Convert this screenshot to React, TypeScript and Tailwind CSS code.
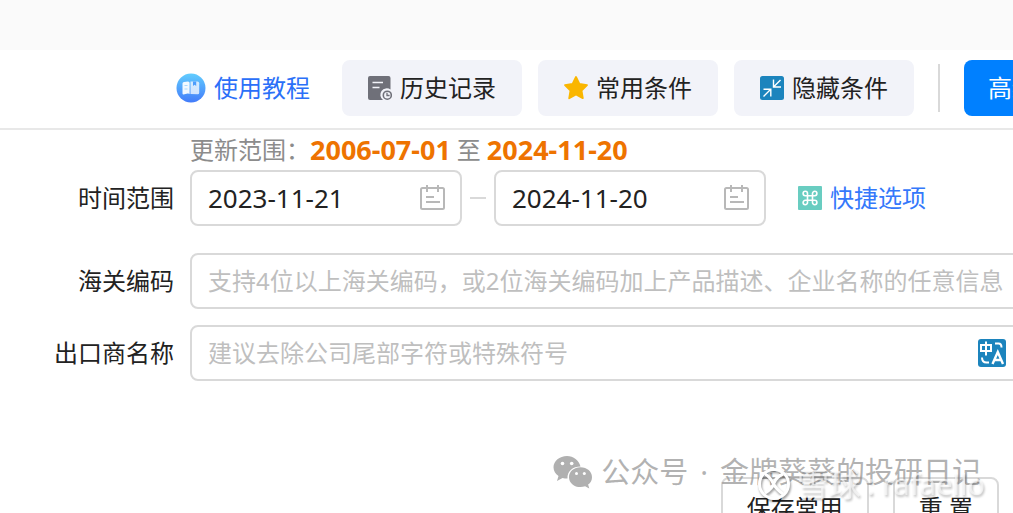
import { useState } from 'react';
import type { ReactNode } from 'react';

const BookIcon = () => (
  <svg viewBox="0 0 30 30" className="size-[30px] shrink-0" aria-hidden="true">
    <defs>
      <linearGradient id="book-bg" x1="0" y1="0" x2="0" y2="1">
        <stop offset="0" stopColor="#62cdfe" />
        <stop offset="1" stopColor="#427bfa" />
      </linearGradient>
    </defs>
    <circle cx="15" cy="15" r="14.5" fill="url(#book-bg)" />
    <path d="M6.500 10.500Q6.500 9 8 9l4-.6q1.600 0 1.600 1.600V21q-1-.6-2-.4L7.500 21.400q-1 0-1-1z" fill="#fff" opacity=".92" />
    <path d="M14.500 8.500h7q1.700 0 1.700 1.700v9.500q0 1.500-1.500 1.500l-7.200-.3z" fill="#fff" opacity=".75" />
    <path d="M17 8.500h3.200v4.500l-1.600-1.200-1.600 1.200z" fill="#4c9dfc" />
    <path d="M8.500 12.500h3M8.500 16h3" stroke="#a9d8ff" strokeWidth="1.200" />
  </svg>
);

const HistoryIcon = () => (
  <svg viewBox="0 0 24 24" className="size-6 shrink-0" aria-hidden="true">
    <path d="M2 0h18.500q2 0 2 2v11.500a6 6 0 0 0-7.500 10.500H2q-2 0-2-2V2q0-2 2-2z" fill="#6f7079" />
    <path d="M4.500 6.500h10.500M4.500 11.500h7" stroke="#f3f4fa" strokeWidth="1.600" />
    <circle cx="19.300" cy="19.200" r="4" fill="none" stroke="#6f7079" strokeWidth="1.600" />
    <path d="M19 16.800v2.700h2.600" fill="none" stroke="#6f7079" strokeWidth="1.300" />
  </svg>
);

const StarIcon = () => (
  <svg viewBox="0 0 24 24" className="size-6 shrink-0" aria-hidden="true">
    <path
      d="M12 1l3.400 7 7.600 1.100-5.500 5.400 1.300 7.700L12 18.500l-6.800 3.700 1.300-7.700L1 9.100 8.600 8z"
      fill="#fab600"
      stroke="#fab600"
      strokeWidth="1.800"
      strokeLinejoin="round"
    />
  </svg>
);

const CollapseIcon = () => (
  <svg viewBox="0 0 24 24" className="size-6 shrink-0" aria-hidden="true">
    <rect width="24" height="24" rx="2.500" fill="#1c84bd" />
    <path d="M20.500 4l-7 7M13.500 3.500V11H21M3.500 20.500l7-7M3.500 13.200h7.300V20.500" fill="none" stroke="#fff" strokeWidth="1.400" />
  </svg>
);

const CalendarIcon = () => (
  <svg viewBox="0 0 26 26" className="size-[26px] shrink-0" fill="none" stroke="#b8b8b8" strokeWidth="2" aria-hidden="true">
    <rect x="2" y="3" width="23" height="21" rx="1.500" />
    <path d="M8 0v7M19 0v7M7 12h8M7 17h14" />
  </svg>
);

const CommandIcon = () => (
  <svg viewBox="0 0 24 24" className="size-6 shrink-0" aria-hidden="true">
    <rect width="24" height="24" rx="1" fill="#69cdc1" />
    <path
      d="M9.500 7.500v9a2.200 2.200 0 1 1-2.200-2.200h9.400a2.200 2.200 0 1 1-2.200 2.200v-9a2.200 2.200 0 1 1 2.200 2.200H7.300a2.200 2.200 0 1 1 2.200-2.200z"
      fill="none"
      stroke="#fff"
      strokeWidth="1.600"
    />
  </svg>
);

const TranslateIcon = () => (
  <svg viewBox="0 0 28 28" className="size-7 shrink-0" fill="none" stroke="#fff" strokeWidth="2" aria-hidden="true">
    <rect width="28" height="28" rx="3" fill="#1c84bd" stroke="none" />
    <path d="M3 6h10v6H3zM8 2.500v14" />
    <path d="M17 4.500h3.500q3 0 3 4M4 18.500q0 5 4.500 5H11" />
    <path d="M14.500 25l5.300-12 5.200 12M16.500 21h6.500" strokeWidth="2.400" />
  </svg>
);

const WechatIcon = () => (
  <svg viewBox="0 0 40 34" className="h-[34px] w-10 shrink-0" aria-hidden="true">
    <path d="M14 1C6.500 1 .5 6 .5 12.300c0 3.500 1.900 6.600 5 8.700L4 26l5.500-3c1.500.4 3 .6 5 .6C14 16 20 11.500 27.500 11.500 26 5.500 20.500 1 14 1z" fill="#b0b0b0" />
    <path d="M27.500 12.300c-6.500 0-11.500 4.300-11.500 9.900s5 9.900 11.500 9.900c1.600 0 3.200-.3 4.600-.8l4.200 2.200-1.200-3.900c2.500-1.800 3.900-4.400 3.900-7.400 0-5.600-5-9.900-11.500-9.900z" fill="#b0b0b0" />
    <g fill="#fff">
      <circle cx="9.500" cy="8.500" r="1.800" />
      <circle cx="18.700" cy="8.500" r="1.800" />
      <circle cx="23.500" cy="18.500" r="1.500" />
      <circle cx="31.300" cy="18.500" r="1.500" />
    </g>
  </svg>
);

const SnowballIcon = () => (
  <svg viewBox="0 0 34 34" className="size-[34px] shrink-0" fill="none" stroke="#fff" strokeWidth="3" aria-hidden="true">
    <circle cx="17" cy="17" r="14.500" />
    <path d="M8 7q5 3 8 9t10 11M26 7q-7 3-9 9T8 26" />
  </svg>
);

const ToolButton = ({ icon, children }: { icon: ReactNode; children: ReactNode }) => (
  <button
    type="button"
    className="flex h-14 shrink-0 items-center gap-2 rounded-lg border-2 border-[#f2f3f9] bg-[#f2f3f9] px-6 whitespace-nowrap"
  >
    {icon}
    {children}
  </button>
);

const DateField = ({ id, label, value, onChange }: { id: string; label: string; value: string; onChange: (v: string) => void }) => (
  <div className="flex h-14 w-[272px] shrink-0 items-center rounded-lg border-2 border-[#d9d9d9] bg-white pr-[15px] pl-4">
    <input
      id={id}
      aria-label={label}
      value={value}
      onChange={e => onChange(e.target.value)}
      className="min-w-0 flex-1 text-[26px] outline-none"
    />
    <CalendarIcon />
  </div>
);

const labelClass = 'w-[174px] shrink-0 text-right whitespace-nowrap';
const fieldClass = 'flex h-14 min-w-0 flex-1 items-center rounded-lg border-2 border-[#d9d9d9] bg-white pl-4 pr-[21px]';
const inputClass = 'min-w-0 flex-1 outline-none placeholder:text-[#bfbfbf]';

export default function App() {
  const [start, setStart] = useState('2023-11-21');
  const [end, setEnd] = useState('2024-11-20');
  const [code, setCode] = useState('');
  const [exporter, setExporter] = useState('');

  return (
    <div className="relative h-screen overflow-hidden bg-white font-['Noto_Sans','Noto_Sans_CJK_SC',sans-serif] text-2xl leading-8 text-[#222]">
      <div className="h-[50px] bg-[#fafafa]" />

      <header className="flex items-center border-b-2 border-[#e8e8e8] pt-2.5 pb-3 pl-44">
        <a href="#tutorial" className="mr-8 flex shrink-0 items-center gap-2 whitespace-nowrap text-[#2b70f8]">
          <BookIcon />
          使用教程
        </a>
        <div className="flex shrink-0 gap-4">
          <ToolButton icon={<HistoryIcon />}>历史记录</ToolButton>
          <ToolButton icon={<StarIcon />}>常用条件</ToolButton>
          <ToolButton icon={<CollapseIcon />}>隐藏条件</ToolButton>
        </div>
        <div className="mx-6 h-12 w-0.5 shrink-0 bg-[#d9d9d9]" />
        <button type="button" className="h-14 shrink-0 rounded-lg bg-[#0080ff] px-6 whitespace-nowrap text-white">
          高级搜索
        </button>
      </header>

      <form className="-mr-4" onSubmit={e => e.preventDefault()}>
        <p className="flex h-10 items-center pl-[190px] whitespace-nowrap text-[#8c8c8c]">
          更新范围：
          <b className="text-[27px] text-[#ee7300]">2006-07-01</b>
          <span className="mx-1.5">至</span>
          <b className="text-[27px] text-[#ee7300]">2024-11-20</b>
        </p>

        <div className="flex items-center">
          <label htmlFor="start" className={labelClass}>时间范围</label>
          <div className="ml-4 flex items-center gap-2">
            <DateField id="start" label="时间范围" value={start} onChange={setStart} />
            <span className="h-0.5 w-4 bg-[#d9d9d9]" />
            <DateField id="end" label="时间范围" value={end} onChange={setEnd} />
          </div>
          <button type="button" className="ml-8 flex shrink-0 items-center gap-2 whitespace-nowrap text-[#3478fb]">
            <CommandIcon />
            快捷选项
          </button>
        </div>

        <div className="mt-[27px] flex items-center gap-4">
          <label htmlFor="code" className={labelClass}>海关编码</label>
          <div className={fieldClass}>
            <input
              id="code"
              value={code}
              onChange={e => setCode(e.target.value)}
              placeholder="支持4位以上海关编码，或2位海关编码加上产品描述、企业名称的任意信息"
              className={inputClass}
            />
          </div>
        </div>

        <div className="mt-4 flex items-center gap-4">
          <label htmlFor="exporter" className={labelClass}>出口商名称</label>
          <div className={fieldClass}>
            <input
              id="exporter"
              value={exporter}
              onChange={e => setExporter(e.target.value)}
              placeholder="建议去除公司尾部字符或特殊符号"
              className={inputClass}
            />
            <button type="button" aria-label="翻译">
              <TranslateIcon />
            </button>
          </div>
        </div>

        <div className="mt-24 flex justify-end gap-6 pr-[30px]">
          <button type="button" className="h-[62px] rounded-lg border-2 border-[#d9d9d9] bg-white px-6">保存常用</button>
          <button type="reset" className="h-[62px] rounded-lg border-2 border-[#d9d9d9] bg-white px-6">重 置</button>
        </div>
      </form>

      {/* watermarks */}
      <div className="pointer-events-none absolute right-8 bottom-6 flex items-center gap-2 text-[29px] whitespace-nowrap text-[#999]/75">
        <WechatIcon />
        <span className="flex gap-3">
          <span>公众号</span>
          <span>·</span>
          <span>金牌葵葵的投研日记</span>
        </span>
      </div>
      <div className="pointer-events-none absolute right-7 bottom-3 flex items-center gap-1.5 text-[29px] whitespace-nowrap text-white/60 drop-shadow-[1px_2px_1px_rgba(0,0,0,0.4)]">
        <SnowballIcon />
        <span className="text-[32px]">雪球</span>
        <span>: rafaello</span>
      </div>
    </div>
  );
}
